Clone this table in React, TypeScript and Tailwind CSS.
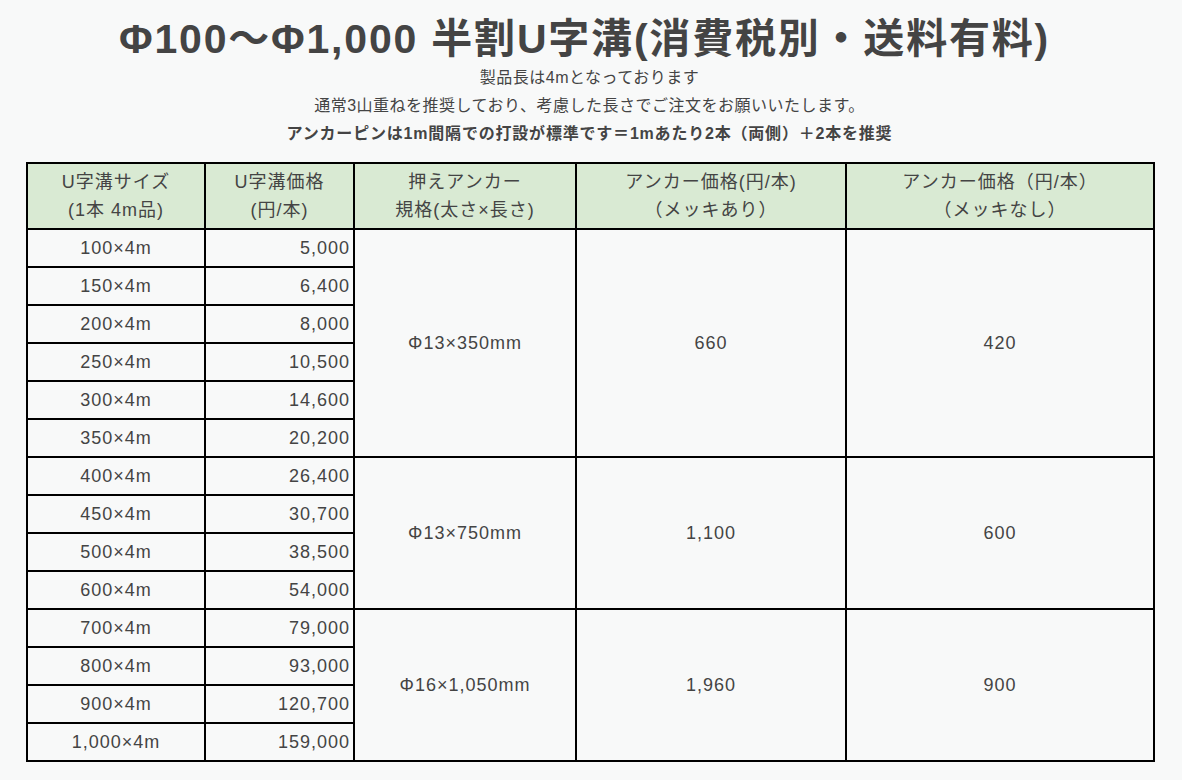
const font = "font-['Liberation_Sans','Noto_Sans_CJK_JP',sans-serif]";

interface Row {
  size: string;
  price: string;
}

interface Group {
  rows: Row[];
  anchor: string;
  plated: string;
  plain: string;
}

const groups: Group[] = [
  {
    rows: [
      { size: '100×4m', price: '5,000' },
      { size: '150×4m', price: '6,400' },
      { size: '200×4m', price: '8,000' },
      { size: '250×4m', price: '10,500' },
      { size: '300×4m', price: '14,600' },
      { size: '350×4m', price: '20,200' },
    ],
    anchor: 'Φ13×350mm',
    plated: '660',
    plain: '420',
  },
  {
    rows: [
      { size: '400×4m', price: '26,400' },
      { size: '450×4m', price: '30,700' },
      { size: '500×4m', price: '38,500' },
      { size: '600×4m', price: '54,000' },
    ],
    anchor: 'Φ13×750mm',
    plated: '1,100',
    plain: '600',
  },
  {
    rows: [
      { size: '700×4m', price: '79,000' },
      { size: '800×4m', price: '93,000' },
      { size: '900×4m', price: '120,700' },
      { size: '1,000×4m', price: '159,000' },
    ],
    anchor: 'Φ16×1,050mm',
    plated: '1,960',
    plain: '900',
  },
];

const th = 'border-2 border-black bg-[#d9ead3] font-normal text-center leading-[28px] py-[4px]';
const td = 'border-2 border-black h-[38px] p-0';

export default function App() {
  return (
    <div className={`min-h-screen bg-[#f8f9f9] text-[#444] ${font}`}>
      <div className="w-[1127px] ml-[26px] pt-[13px]">
        {/* Title */}
        <h1 className="text-center text-[41px] font-bold leading-[52px] tracking-[1.8px] pr-[10px] text-[#444]">
          Φ100〜Φ1,000 半割U字溝(消費税別・送料有料)
        </h1>
        <div className="text-center text-[16px] leading-[28px] tracking-[0.5px] -mt-[1px]">
          <p>製品長は4mとなっております</p>
          <p>通常3山重ねを推奨しており、考慮した長さでご注文をお願いいたします。</p>
          <p className="font-bold tracking-[0.8px]">アンカーピンは1m間隔での打設が標準です＝1mあたり2本（両側）＋2本を推奨</p>
        </div>

        {/* Price table */}
        <table className="mt-[14px] w-full border-collapse table-fixed text-[18px] tracking-[1px]">
          <colgroup>
            <col className="w-[178px]" />
            <col className="w-[149px]" />
            <col className="w-[222px]" />
            <col className="w-[270px]" />
            <col className="w-[308px]" />
          </colgroup>
          <thead>
            <tr>
              <th className={th}>
                U字溝サイズ
                <br />
                (1本 4m品)
              </th>
              <th className={th}>
                U字溝価格
                <br />
                (円/本)
              </th>
              <th className={th}>
                押えアンカー
                <br />
                規格(太さ×長さ)
              </th>
              <th className={th}>
                アンカー価格(円/本)
                <br />
                （メッキあり）
              </th>
              <th className={th}>
                アンカー価格（円/本）
                <br />
                （メッキなし）
              </th>
            </tr>
          </thead>
          <tbody>
            {groups.map((g) =>
              g.rows.map((r, i) => (
                <tr key={r.size}>
                  <td className={`${td} text-center`}>{r.size}</td>
                  <td className={`${td} text-right pr-[3px]`}>{r.price}</td>
                  {i === 0 && (
                    <>
                      <td rowSpan={g.rows.length} className={`${td} text-center`}>
                        {g.anchor}
                      </td>
                      <td rowSpan={g.rows.length} className={`${td} text-center`}>
                        {g.plated}
                      </td>
                      <td rowSpan={g.rows.length} className={`${td} text-center`}>
                        {g.plain}
                      </td>
                    </>
                  )}
                </tr>
              ))
            )}
          </tbody>
        </table>
      </div>
    </div>
  );
}
